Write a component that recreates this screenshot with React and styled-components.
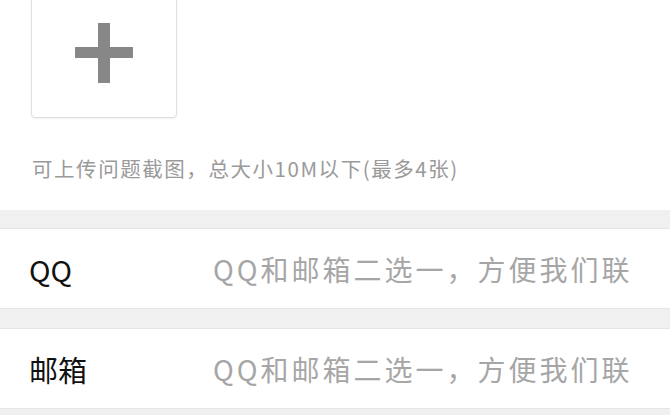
import React from "react"
import styled, { createGlobalStyle } from "styled-components"

const GlobalStyle = createGlobalStyle`
  body {
    margin: 0;
    background: #fff;
    font-family: "Noto Sans CJK SC", "Noto Sans", sans-serif;
    overflow: hidden;
  }
`

const Page = styled.div`
  width: 670px;
  height: 415px;
  overflow: hidden;
  background: #f0f0f0;
`

const UploadSection = styled.section`
  background: #fff;
  padding: 0 0 30px 31px;
`

const UploadBox = styled.button`
  box-sizing: border-box;
  width: 146px;
  height: 131px;
  margin-top: -13px;
  padding: 0;
  display: flex;
  align-items: center;
  justify-content: center;
  background: #fff;
  border: 1px solid #dedede;
  border-radius: 4px;
  box-shadow: 0 1px 2px rgba(0, 0, 0, 0.06);
`

const Hint = styled.p`
  margin: 38px 0 0 1px;
  font-size: 20.5px;
  line-height: 24px;
  letter-spacing: 1.55px;
  color: #9a9a9a;
  white-space: nowrap;
`

const Form = styled.div`
  padding-top: 18px;
  display: flex;
  flex-direction: column;
  gap: 19px;
`

const Row = styled.label`
  box-sizing: border-box;
  height: 81px;
  display: flex;
  align-items: center;
  background: #fff;
  border-top: 1px solid #e6e6e6;
  border-bottom: 1px solid #e6e6e6;
`

const Label = styled.span`
  flex: 0 0 184px;
  padding-left: 29px;
  font-size: 29px;
  color: #111;
`

const Input = styled.input`
  flex: 1;
  min-width: 0;
  margin-right: 36px;
  padding: 0;
  border: none;
  outline: none;
  background: transparent;
  font-family: inherit;
  font-size: 28px;
  letter-spacing: 3px;
  color: #333;
  &::placeholder {
    color: #a6a6a6;
  }
`

const PlusIcon = () => (
  <svg width="58" height="60" viewBox="0 0 58 60">
    <rect x="0" y="24" width="58" height="11" fill="#878787" />
    <rect x="23" y="0" width="12" height="60" fill="#878787" />
  </svg>
)

const fields = [
  { label: "QQ", placeholder: "QQ和邮箱二选一，方便我们联系您" },
  { label: "邮箱", placeholder: "QQ和邮箱二选一，方便我们联系您" },
]

const App = () => {
  return (
    <Page>
      <GlobalStyle />
      <UploadSection>
        <UploadBox type="button">
          <PlusIcon />
        </UploadBox>
        <Hint>可上传问题截图，总大小10M以下(最多4张)</Hint>
      </UploadSection>
      <Form>
        {fields.map((field, idx) => (
          <Row key={idx}>
            <Label>{field.label}</Label>
            <Input placeholder={field.placeholder} />
          </Row>
        ))}
      </Form>
    </Page>
  )
}

export default App
